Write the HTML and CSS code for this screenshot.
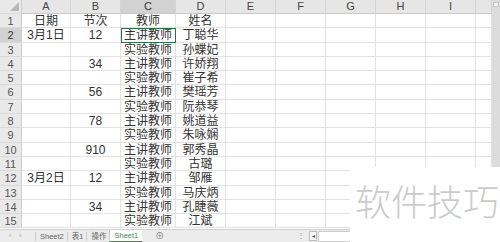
FILE: index.html
```html
<!DOCTYPE html>
<html lang="zh">
<head>
  <meta charset="UTF-8" />
  <title>Sheet1</title>
  <link rel="stylesheet" href="styles.css">
</head>
<body>
  <div class="book">
    <div class="sheet-area">
      <div class="grid">
        <div class="row col-head">
          <div class="rh corner"><span class="tri"></span></div>
          <div>A</div><div>B</div><div class="sel">C</div><div>D</div><div>E</div><div>F</div><div>G</div><div>H</div><div>I</div><div></div>
        </div>
        <div class="row"><div class="rh">1</div><div>日期</div><div>节次</div><div>教师</div><div>姓名</div><div></div><div></div><div></div><div></div><div></div><div></div></div>
        <div class="row"><div class="rh sel">2</div><div>3月1日</div><div>12</div><div class="active">主讲教师</div><div>丁聪华</div><div></div><div></div><div></div><div></div><div></div><div></div></div>
        <div class="row"><div class="rh">3</div><div></div><div></div><div>实验教师</div><div>孙蝶妃</div><div></div><div></div><div></div><div></div><div></div><div></div></div>
        <div class="row"><div class="rh">4</div><div></div><div>34</div><div>主讲教师</div><div>许娇翔</div><div></div><div></div><div></div><div></div><div></div><div></div></div>
        <div class="row"><div class="rh">5</div><div></div><div></div><div>实验教师</div><div>崔子希</div><div></div><div></div><div></div><div></div><div></div><div></div></div>
        <div class="row"><div class="rh">6</div><div></div><div>56</div><div>主讲教师</div><div>樊瑶芳</div><div></div><div></div><div></div><div></div><div></div><div></div></div>
        <div class="row"><div class="rh">7</div><div></div><div></div><div>实验教师</div><div>阮恭琴</div><div></div><div></div><div></div><div></div><div></div><div></div></div>
        <div class="row"><div class="rh">8</div><div></div><div>78</div><div>主讲教师</div><div>姚道益</div><div></div><div></div><div></div><div></div><div></div><div></div></div>
        <div class="row"><div class="rh">9</div><div></div><div></div><div>实验教师</div><div>朱咏娴</div><div></div><div></div><div></div><div></div><div></div><div></div></div>
        <div class="row"><div class="rh">10</div><div></div><div>910</div><div>主讲教师</div><div>郭秀晶</div><div></div><div></div><div></div><div></div><div></div><div></div></div>
        <div class="row"><div class="rh">11</div><div></div><div></div><div>实验教师</div><div>古璐</div><div></div><div></div><div></div><div></div><div></div><div></div></div>
        <div class="row"><div class="rh">12</div><div>3月2日</div><div>12</div><div>主讲教师</div><div>邹雁</div><div></div><div></div><div></div><div></div><div></div><div></div></div>
        <div class="row"><div class="rh">13</div><div></div><div></div><div>实验教师</div><div>马庆炳</div><div></div><div></div><div></div><div></div><div></div><div></div></div>
        <div class="row"><div class="rh">14</div><div></div><div>34</div><div>主讲教师</div><div>孔睫薇</div><div></div><div></div><div></div><div></div><div></div><div></div></div>
        <div class="row"><div class="rh">15</div><div></div><div></div><div>实验教师</div><div>江斌</div><div></div><div></div><div></div><div></div><div></div><div></div></div>
      </div>
      <div class="vscroll">
        <span class="vscroll-up"></span>
      </div>
    </div>

    <div class="tab-bar">
      <span class="nav">‹</span>
      <span class="nav">›</span>
      <span class="tab">Sheet2</span>
      <span class="tab">表1</span>
      <span class="tab">操作</span>
      <span class="tab active-tab">Sheet1</span>
      <span class="add">⊕</span>
      <span class="spacer"></span>
      <span class="split">⋮</span>
      <span class="hs-left">◂</span>
      <span class="hs-track"></span>
    </div>
  </div>

  <div class="watermark">软件技巧</div>
</body>
</html>
```

FILE: styles.css
```css
body {
  margin: 0;
  width: 500px;
  height: 242px;
  overflow: hidden;
  background: #fff;
  font-family: "Liberation Sans", "Noto Sans CJK SC", sans-serif;
  position: relative;
}

.book {
  display: flex;
  flex-direction: column;
  height: 242px;
}

.sheet-area {
  display: flex;
  height: 229px;
  overflow: hidden;
}

.grid {
  width: 492px;
  flex: none;
}

.row {
  display: grid;
  grid-template-columns: 22px 49px 50px 55px 50px 50px 50px 50px 50px 50px 16px;
  height: 14.3px;
}

.row > div {
  box-sizing: border-box;
  border-right: 1px solid #e2e2e2;
  border-bottom: 1px solid #e2e2e2;
  text-align: center;
  white-space: nowrap;
  overflow: hidden;
  font-size: 12px;
  line-height: 14px;
  color: #333;
}

.row > .rh {
  background: #e9e9e9;
  font-size: 11px;
  color: #555;
  border-right-color: #cfcfcf;
  border-bottom-color: #d9d9d9;
}

.col-head {
  height: 14px;
}

.col-head > div {
  background: #e6e6e6;
  color: #444;
  font-size: 11px;
  line-height: 13px;
  border-bottom: 1px solid #c9c9c9;
  border-right-color: #d4d4d4;
}

.row > .sel {
  background: #d2d2d2;
  color: #333;
}

.corner {
  position: relative;
}

.tri {
  position: absolute;
  right: 2px;
  bottom: 2px;
  width: 0;
  height: 0;
  border-left: 9px solid transparent;
  border-bottom: 9px solid #b8b8b8;
}

.row > .active {
  outline: 1px solid #2f6e48;
  outline-offset: -1px;
}

.vscroll {
  width: 8px;
  height: 167px;
  background: #dcdcdc;
  position: relative;
  flex: none;
}

.vscroll-up {
  position: absolute;
  top: 2px;
  left: 1px;
  width: 6px;
  height: 5px;
  background: #f2f2f2;
  border: 1px solid #c4c4c4;
  box-sizing: border-box;
}

.tab-bar {
  height: 13px;
  display: flex;
  align-items: center;
  background: #ececec;
  border-top: 1px solid #d0d0d0;
  box-sizing: border-box;
  font-size: 7.5px;
  color: #666;
}

.nav {
  width: 10px;
  text-align: center;
  color: #aaa;
  font-size: 8px;
  line-height: 10px;
}

.nav:first-child {
  margin-left: 5px;
}

.tab {
  padding: 0 3px 0 4px;
  border-left: 1px solid #c8c8c8;
  line-height: 9px;
}

.tab-bar .tab:nth-child(3) {
  margin-left: 10px;
}

.active-tab {
  background: #fff;
  color: #3e8a55;
  line-height: 11px;
  padding: 0 4px;
  border-bottom: 1px solid #3e8a55;
}

.add {
  margin-left: 13px;
  color: #888;
  font-size: 9px;
  line-height: 10px;
}

.spacer {
  flex: 1;
}

.split {
  color: #999;
  margin-right: 4px;
  line-height: 10px;
}

.hs-left {
  width: 6px;
  height: 8px;
  line-height: 8px;
  font-size: 6px;
  text-align: center;
  background: #f7f7f7;
  border: 1px solid #bbb;
  color: #555;
}

.hs-track {
  width: 180px;
  height: 9px;
  background: #fff;
  border: 1px solid #ccc;
  margin-left: 1px;
}

.watermark {
  position: absolute;
  left: 350px;
  top: 167px;
  width: 150px;
  height: 75px;
  background: #fff;
  font-family: "Noto Sans CJK SC", sans-serif;
  font-size: 36px;
  font-weight: 300;
  color: #cbcbcb;
  line-height: 36px;
  padding: 15px 0 0 5px;
  box-sizing: border-box;
}
```
